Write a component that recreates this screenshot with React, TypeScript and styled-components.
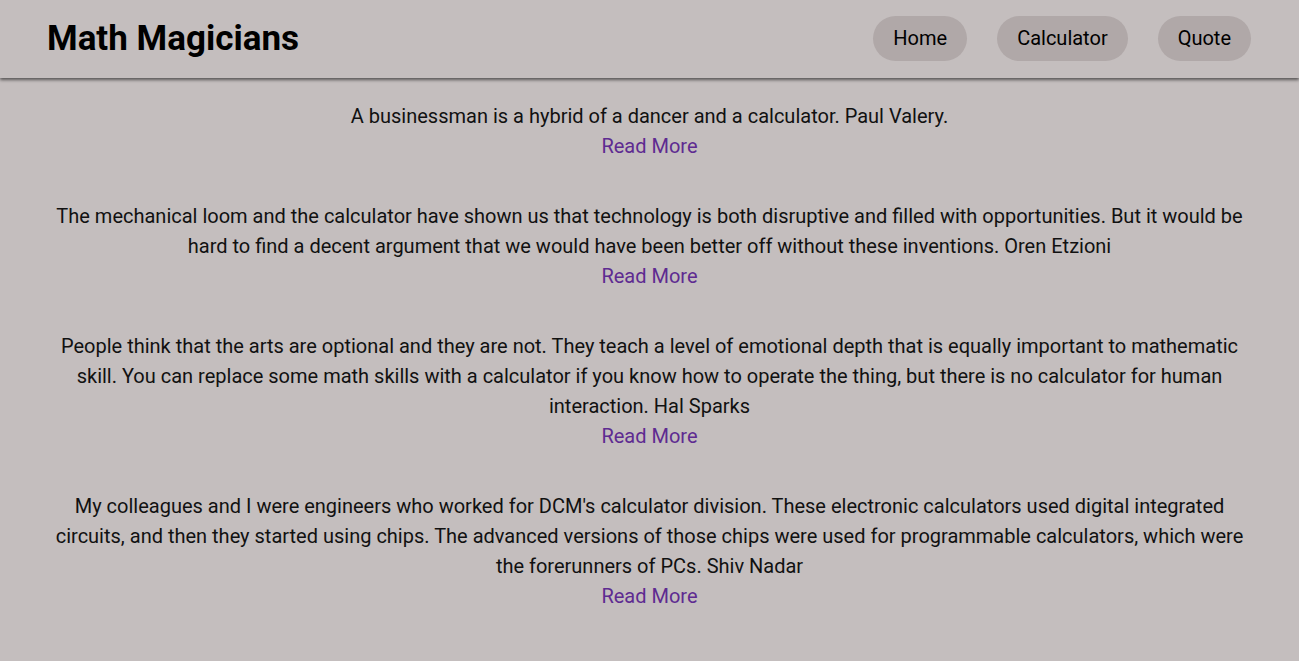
import React from "react";
import styled, { createGlobalStyle } from "styled-components";

const Global = createGlobalStyle`
  html, body { margin: 0; padding: 0; }
  body {
    background: #c4bebe;
    font-family: Roboto, "Noto Sans", "Liberation Sans", sans-serif;
    color: #111;
  }
`;

const Header = styled.header`
  display: flex;
  align-items: center;
  justify-content: space-between;
  height: 78px;
  padding: 0 48px 2px 47px;
  box-sizing: border-box;
  background: #c4bebe;
  box-shadow: 0 2px 3px rgba(0, 0, 0, 0.55);
`;

const Title = styled.h1`
  margin: 0;
  font-size: 35px;
  font-weight: 700;
  color: #000;
`;

const Nav = styled.nav`
  display: flex;
  gap: 30px;
`;

const Pill = styled.a`
  display: block;
  padding: 11px 20px;
  border-radius: 23px;
  background: #b0a8a8;
  color: #000;
  font-size: 20px;
  line-height: 23px;
  text-decoration: none;
`;

const Main = styled.main`
  display: flex;
  flex-direction: column;
  gap: 40px;
  padding: 23px 48px 40px;
`;

const Quote = styled.article`
  text-align: center;
  font-size: 20px;
  line-height: 30px;
`;

const Text = styled.p`
  margin: 0;
  color: #111;
`;

const ReadMore = styled.a`
  color: #5e2b91;
  text-decoration: none;
`;

const quotes = [
  "A businessman is a hybrid of a dancer and a calculator. Paul Valery.",
  "The mechanical loom and the calculator have shown us that technology is both disruptive and filled with opportunities. But it would be hard to find a decent argument that we would have been better off without these inventions. Oren Etzioni",
  "People think that the arts are optional and they are not. They teach a level of emotional depth that is equally important to mathematic skill. You can replace some math skills with a calculator if you know how to operate the thing, but there is no calculator for human interaction. Hal Sparks",
  "My colleagues and I were engineers who worked for DCM's calculator division. These electronic calculators used digital integrated circuits, and then they started using chips. The advanced versions of those chips were used for programmable calculators, which were the forerunners of PCs. Shiv Nadar",
];

export default function App() {
  return (
    <>
      <Global />
      <Header>
        <Title>Math Magicians</Title>
        <Nav>
          <Pill href="#">Home</Pill>
          <Pill href="#">Calculator</Pill>
          <Pill href="#">Quote</Pill>
        </Nav>
      </Header>
      <Main>
        {quotes.map((q) => (
          <Quote key={q}>
            <Text>{q}</Text>
            <ReadMore href="#">Read More</ReadMore>
          </Quote>
        ))}
      </Main>
    </>
  );
}
